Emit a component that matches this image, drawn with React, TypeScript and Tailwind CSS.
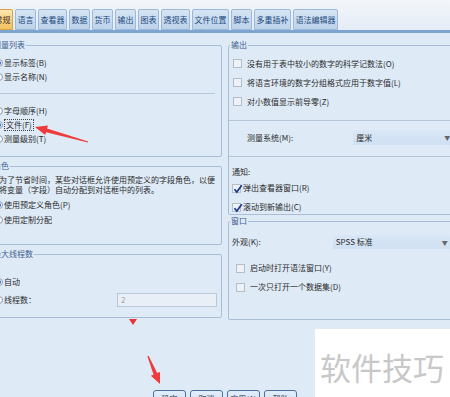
import React from 'react'

const tabs = ['语言', '查看器', '数据', '货币', '输出', '图表', '透视表', '文件位置', '脚本', '多重插补', '语法编辑器']

function Radio({ on }: { on?: boolean }) {
	return (
		<span className="flex h-[8px] w-[8px] shrink-0 items-center justify-center rounded-full border border-[#8c9db3] bg-[#f4f7fb]">
			{on && <span className="h-[4px] w-[4px] rounded-full bg-[#2d6cc4]" />}
		</span>
	)
}

function Check({ on }: { on?: boolean }) {
	return (
		<span className="relative flex h-[9px] w-[9px] shrink-0 items-center justify-center border border-[#b4bec9] bg-[#eef1f5]">
			{on && (
				<svg width="10" height="10" viewBox="0 0 10 10" className="absolute -top-[1px] left-0">
					<path d="M1.5 5.2 L3.8 8 L8.8 1.2" fill="none" stroke="#1f3d8f" strokeWidth="1.8" />
				</svg>
			)}
		</span>
	)
}

function Group({ title, className, children }: { title: string; className?: string; children: React.ReactNode }) {
	return (
		<fieldset className={`min-w-0 rounded-[2px] border border-[#a9bed6] ${className ?? ''}`}>
			<legend className="ml-[1px] px-[1px] text-[8px] leading-[12px] text-[#3d5f8f]">{title}</legend>
			{children}
		</fieldset>
	)
}

function Dropdown({ text, className }: { text: string; className?: string }) {
	return (
		<div className={`flex items-center justify-between bg-gradient-to-b from-[#d9e7f6] to-[#cfe0f3] pl-[3px] pr-[3px] ${className ?? ''}`}>
			<span>{text}</span>
			<span className="text-[6px] text-[#666]">▼</span>
		</div>
	)
}

export default function App() {
	return (
		<div className="relative h-[397px] w-[450px] overflow-hidden whitespace-nowrap bg-[#dfeaf7] font-['Noto_Sans_CJK_SC',sans-serif] text-[8px] text-[#2a2a2a]">
			<header className="h-[33px] border-b-[3px] border-[#7ea5cf] bg-gradient-to-b from-[#f3f6fa] to-[#e4ecf6]">
				<div className="ml-[-8px] flex gap-[2px] pt-[9px]">
					<div className="flex h-[21px] items-center rounded-t-[2px] border border-[#d6a443] bg-gradient-to-b from-[#fde7ae] to-[#f5c25c] px-[1.5px] text-[#3a2a10]">
						常规
					</div>
					{tabs.map((t) => (
						<div
							key={t}
							className="flex h-[21px] items-center rounded-t-[2px] border border-[#9db8d8] bg-gradient-to-b from-[#d6e5f4] to-[#bcd3eb] px-[1.5px] text-[#24497d]"
						>
							{t}
						</div>
					))}
				</div>
			</header>

			<main className="flex h-[287px] items-start gap-[6px]">
				<div className="ml-[-10px] flex w-[232px] shrink-0 flex-col">
					<Group title="测量列表" className="mt-[6px] pb-[10px]">
						<div className="flex flex-col pl-[4px] pt-[5px]">
							<div className="flex h-[14px] items-center gap-[1px]">
								<Radio on />
								<span>显示标签(B)</span>
							</div>
							<div className="flex h-[14px] items-center gap-[1px]">
								<Radio />
								<span>显示名称(N)</span>
							</div>
						</div>
						<div className="mr-[6px] mt-[9px] h-[1px] bg-[#b6c7da]" />
						<div className="flex flex-col pl-[4px] pt-[10px]">
							<div className="flex h-[14px] items-center gap-[1px]">
								<Radio />
								<span>字母顺序(H)</span>
							</div>
							<div className="flex h-[14px] items-center gap-[1px]">
								<Radio on />
								<span className="border border-dotted border-[#444] px-[1px] leading-[10px]">文件(F)</span>
							</div>
							<div className="flex h-[14px] items-center gap-[1px]">
								<Radio />
								<span>测量级别(T)</span>
							</div>
						</div>
					</Group>

					<Group title="角色" className="mt-[3px] pb-[17px]">
						<p className="pl-[8px] pt-[3px] leading-[10px]">
							为了节省时间，某些对话框允许使用预定义的字段角色，以便
							<br />
							将变量（字段）自动分配到对话框中的列表。
						</p>
						<div className="mt-[2px] flex flex-col pl-[4px]">
							<div className="flex h-[15px] items-center gap-[1px]">
								<Radio on />
								<span>使用预定义角色(P)</span>
							</div>
							<div className="flex h-[15px] items-center gap-[1px]">
								<Radio />
								<span>使用定制分配</span>
							</div>
						</div>
					</Group>

					<Group title="最大线程数" className="mt-[3px] pb-[9px]">
						<div className="flex flex-col gap-[2px] pl-[4px] pt-[14px]">
							<div className="flex h-[16px] items-center gap-[1px]">
								<Radio on />
								<span>自动</span>
							</div>
							<div className="flex h-[16px] items-center gap-[1px]">
								<Radio />
								<span>线程数：</span>
								<div className="ml-auto mr-[4px] flex h-[14px] w-[100px] items-center border border-[#b9c7d6] bg-[#e9eff6] pl-[3px] text-[#9aa5b1]">
									2
								</div>
							</div>
						</div>
					</Group>
				</div>

				<div className="flex w-[240px] shrink-0 flex-col">
					<Group title="输出" className="mt-[6px]">
						<div className="flex flex-col pl-[4px] pt-[3px]">
							<div className="flex h-[19px] items-center gap-[5px]">
								<Check />
								<span>没有用于表中较小的数字的科学记数法(O)</span>
							</div>
							<div className="flex h-[19px] items-center gap-[5px]">
								<Check />
								<span>将语言环境的数字分组格式应用于数字值(L)</span>
							</div>
							<div className="flex h-[19px] items-center gap-[5px]">
								<Check />
								<span>对小数值显示前导零(Z)</span>
							</div>
						</div>
						<div className="mt-[9px] h-[1px] bg-[#b6c7da]" />
						<div className="mt-[9px] flex h-[15px] items-center pl-[18px]">
							<span>测量系统(M):</span>
							<Dropdown text="厘米" className="ml-[60px] h-[15px] w-[100px]" />
						</div>
						<div className="mt-[11px] h-[1px] bg-[#b6c7da]" />
						<div className="mt-[8px] flex h-[14px] items-center pl-[3px]">通知:</div>
						<div className="mt-[2px] flex h-[14px] items-center gap-[2px] pl-[3px]">
							<Check on />
							<span>弹出查看器窗口(R)</span>
						</div>
						<div className="mt-[5px] flex h-[14px] items-center gap-[2px] pl-[3px]">
							<Check on />
							<span>滚动到新输出(C)</span>
						</div>
					</Group>

					<Group title="窗口" className="pb-[25px]">
						<div className="mt-[8px] flex h-[14px] items-center pl-[3px]">
							<span>外观(K):</span>
							<Dropdown text="SPSS 标准" className="ml-[72px] h-[14px] w-[118px]" />
						</div>
						<div className="mt-[12px] flex h-[14px] items-center gap-[5px] pl-[7px]">
							<Check />
							<span>启动时打开语法窗口(Y)</span>
						</div>
						<div className="mt-[5px] flex h-[14px] items-center gap-[5px] pl-[7px]">
							<Check />
							<span>一次只打开一个数据集(D)</span>
						</div>
					</Group>
				</div>
			</main>

			<div className="mt-[70px] flex gap-[4px] pl-[153px]">
				{['确定', '取消', '应用(A)', '帮助'].map((b) => (
					<div
						key={b}
						className="flex h-[18px] w-[33px] items-center justify-center rounded-[3px] border border-[#4c6f9c] bg-gradient-to-b from-[#e3eefa] to-[#c6dbf1] text-[#1c2c44]"
					>
						{b}
					</div>
				))}
			</div>

			{/* watermark */}
			<div className="absolute bottom-0 right-0 h-[68px] w-[135px] bg-white pl-[5px] pt-[22px] text-[31px] leading-[31px] text-[#c8c8c8]">
				软件技巧
			</div>

			{/* red annotation arrows */}
			<svg className="pointer-events-none absolute inset-0" width="450" height="397" viewBox="0 0 450 397">
				<polygon
					points="88.1,141.5 47.1,128.4 48,125.5 35,127 45.2,135.1 46.1,132.2 87.9,142.5"
					fill="#ee3b3b"
				/>
				<polygon
					points="147.4,356.2 153.6,374.7 150.8,375.8 160,384 160,372 157.2,373.1 148.6,355.8"
					fill="#ee3b3b"
				/>
				<polygon points="129,319 137,319 133,325" fill="#e8333a" />
			</svg>
		</div>
	)
}
